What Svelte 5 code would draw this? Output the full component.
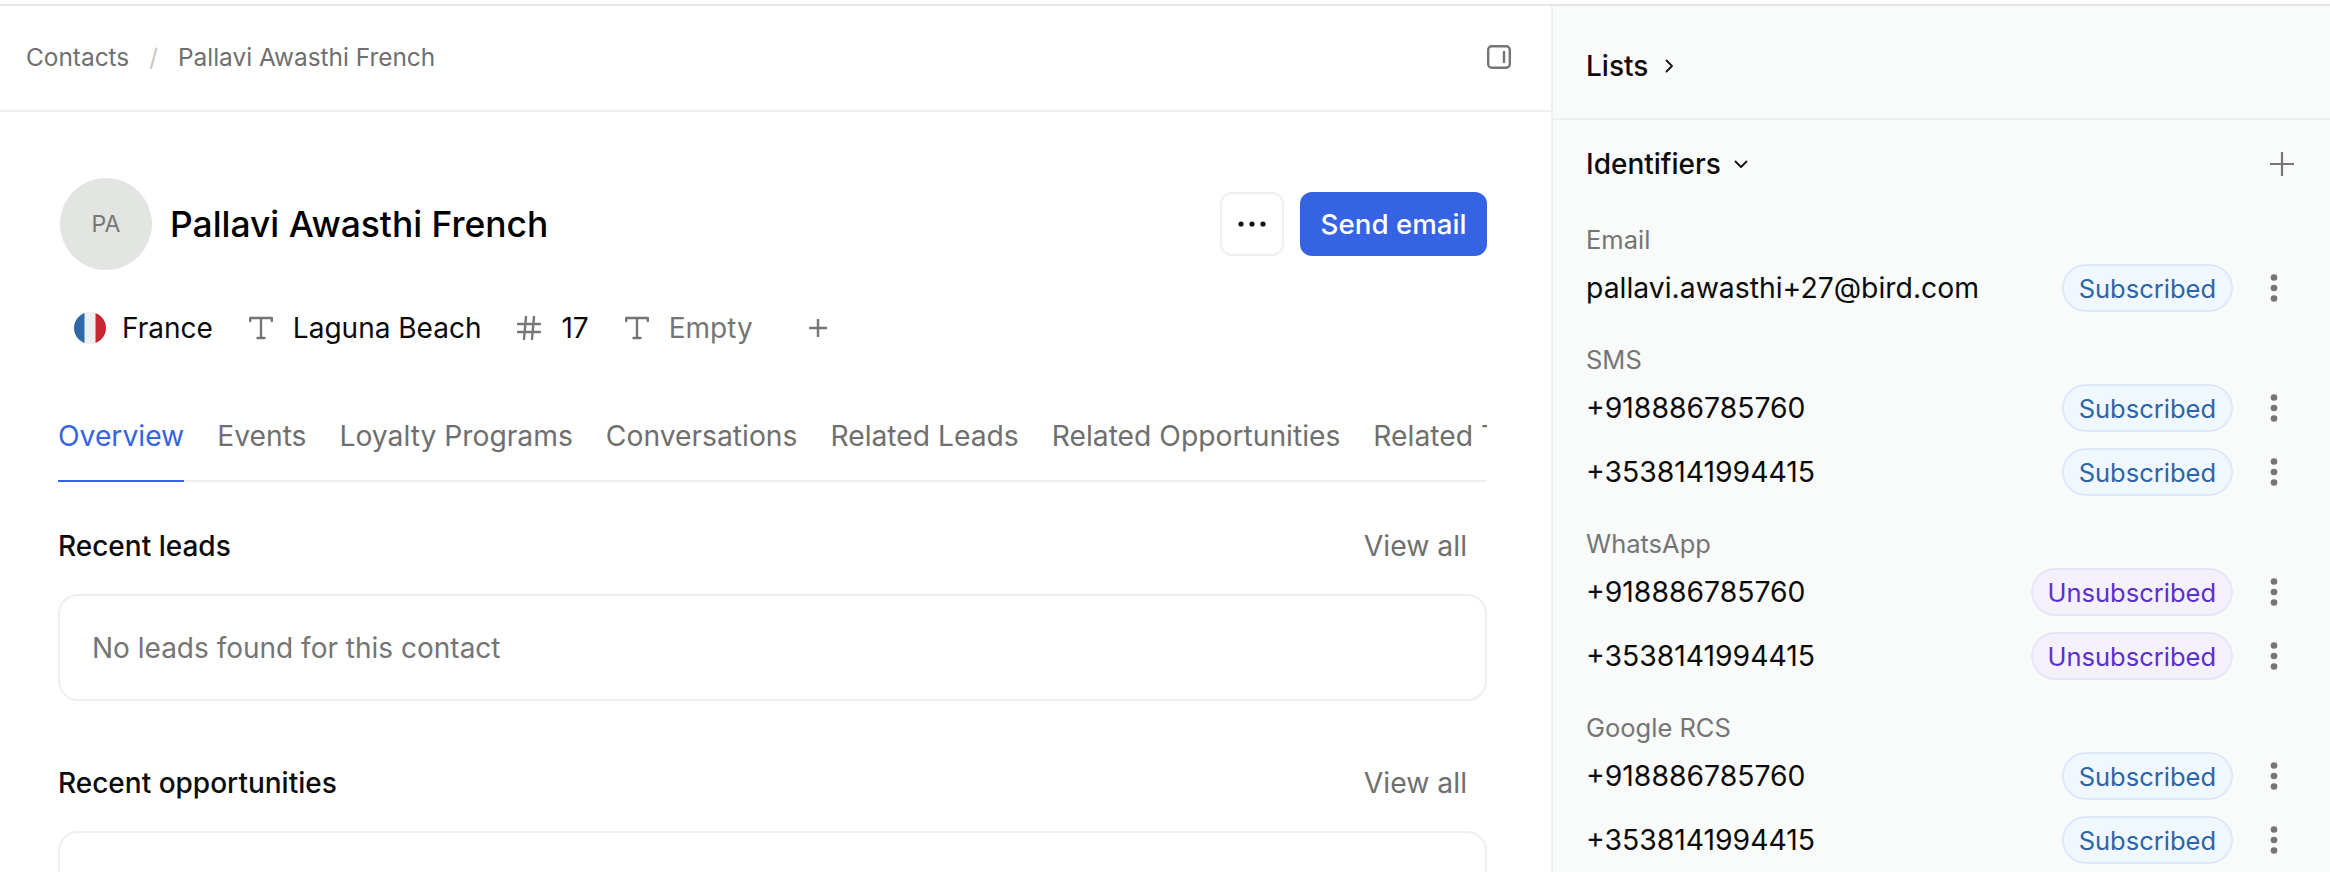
<script>
  const tabs = ['Overview','Events','Loyalty Programs','Conversations','Related Leads','Related Opportunities','Related Tasks'];
  const groups = [
    { label:'Email', rows:[['pallavi.awasthi+27@bird.com','Subscribed']] },
    { label:'SMS', rows:[['+918886785760','Subscribed'],['+3538141994415','Subscribed']] },
    { label:'WhatsApp', rows:[['+918886785760','Unsubscribed'],['+3538141994415','Unsubscribed']] },
    { label:'Google RCS', rows:[['+918886785760','Subscribed'],['+3538141994415','Subscribed']] }
  ];
</script>

{#snippet tIcon()}
  <svg class="ic" viewBox="0 0 24 24" fill="none" stroke="#757575" stroke-width="2.4" stroke-linecap="round" stroke-linejoin="round"><path d="M1.2 5V2h21.600v3M12 2v20M8.500 22h7"/></svg>
{/snippet}

<div class="page">
  <main class="main">
    <header class="crumbs">
      <nav class="trail"><span>Contacts</span><span class="sep">/</span><span>Pallavi Awasthi French</span></nav>
      <svg class="panel-ic" viewBox="0 0 24 24" fill="none" stroke="#757575" stroke-width="2.400"><rect x="1.200" y="1.200" width="21.600" height="21.600" rx="3.500"/><path d="M17 6v12"/></svg>
    </header>
    <section class="content">
      <div class="head">
        <div class="avatar">PA</div>
        <h1>Pallavi Awasthi French</h1>
        <button class="more" aria-label="More"><svg viewBox="0 0 28 6" width="28" height="6" fill="#111"><circle cx="3" cy="3" r="2.600"/><circle cx="14" cy="3" r="2.600"/><circle cx="25" cy="3" r="2.600"/></svg></button>
        <button class="send">Send email</button>
      </div>
      <div class="props">
        <div class="prop flagprop">
          <svg class="flag" viewBox="0 0 32 32"><defs><clipPath id="fc"><circle cx="16" cy="16" r="16"/></clipPath></defs><g clip-path="url(#fc)"><rect width="11" height="32" fill="#2f6aa8"/><rect x="10.500" width="11" height="32" fill="#eeeff1"/><rect x="21.500" width="11" height="32" fill="#c8262f"/></g></svg>
          <span>France</span>
        </div>
        <div class="prop">{@render tIcon()}<span>Laguna Beach</span></div>
        <div class="prop"><svg class="ic" viewBox="0 0 24 24" fill="none" stroke="#757575" stroke-width="2.400" stroke-linecap="round"><path d="M1 8h22M1 16h22M9 1 7 23M17 1l-2 22"/></svg><span>17</span></div>
        <div class="prop">{@render tIcon()}<span class="muted">Empty</span></div>
        <svg class="add" viewBox="0 0 18 18" fill="none" stroke="#757575" stroke-width="2.400"><path d="M9 0v18M0 9h18"/></svg>
      </div>
      <div class="tabs">
        {#each tabs as t, i}<div class="tab" class:active={i===0}>{t}</div>{/each}
      </div>
      <div class="sect-head"><h2>Recent leads</h2><span class="viewall">View all</span></div>
      <div class="card">No leads found for this contact</div>
      <div class="sect-head second"><h2>Recent opportunities</h2><span class="viewall">View all</span></div>
      <div class="card"></div>
    </section>
  </main>
  <aside class="side">
    <div class="lists">
      <span>Lists</span>
      <svg width="9" height="14" viewBox="0 0 9 14" fill="none" stroke="#111" stroke-width="1.800" stroke-linecap="round" stroke-linejoin="round"><path d="m1.500 1.500 5.500 5.500-5.500 5.500"/></svg>
    </div>
    <div class="ids">
      <div class="ids-head">
        <span>Identifiers</span>
        <svg class="chev" width="14" height="9" viewBox="0 0 14 9" fill="none" stroke="#111" stroke-width="1.800" stroke-linecap="round" stroke-linejoin="round"><path d="m1.500 1.500 5.500 5.500 5.500-5.500"/></svg>
        <svg class="plus" viewBox="0 0 24 24" fill="none" stroke="#757575" stroke-width="2.200"><path d="M12 0v24M0 12h24"/></svg>
      </div>
      {#each groups as g}
        <div class="group">
          <div class="glabel">{g.label}</div>
          {#each g.rows as r}
            <div class="row">
              <span class="val">{r[0]}</span>
              <span class="pill" class:un={r[1]==='Unsubscribed'}>{r[1]}</span>
              <svg class="dots" viewBox="0 0 8 28" fill="#757575"><circle cx="4" cy="3.500" r="3.300"/><circle cx="4" cy="14" r="3.300"/><circle cx="4" cy="24.500" r="3.300"/></svg>
            </div>
          {/each}
        </div>
      {/each}
    </div>
  </aside>
</div>

<style>
  :global(body){margin:0;background:#fff;overflow:hidden}
  .page{width:2330px;height:868px;overflow:hidden;display:flex;box-sizing:border-box;border-top:2px solid #e5e7e7;margin-top:4px;font-family:Inter,"Liberation Sans",sans-serif;color:#0b0b0b;font-size:28.350px}
  .main{width:1551px;flex:none;display:flex;flex-direction:column}
  .crumbs{height:106px;box-sizing:border-box;border-bottom:2px solid #eeefef;padding:0 40px 2px 26px;display:flex;align-items:center;justify-content:space-between;flex:none}
  .trail{display:flex;gap:20px;font-size:24.4px;color:#6f6f6f}
  .sep{color:#c6c6c6}
  .panel-ic{width:24px;height:24px}
  .content{padding:66px 64px 0 58px}
  .head{display:flex;align-items:center;height:92px;padding-left:2px}
  .avatar{width:92px;height:92px;border-radius:50%;background:#e3e5e3;color:#777;font-size:23px;display:flex;align-items:center;justify-content:center;flex:none}
  h1{font-size:35.400px;font-weight:450;margin:0 0 0 18px;flex:1;color:#000}
  .more{width:64px;height:64px;border:2px solid #eeefef;border-radius:12px;background:#fff;display:flex;align-items:center;justify-content:center;padding:0}
  .send{margin-left:16px;width:187px;height:64px;border:0;border-radius:12px;background:#3663e4;color:#fff;font:500 27.700px Inter,sans-serif;padding:0}
  .props{display:flex;align-items:center;margin-top:42px;height:32px;padding-left:16px;font-size:28px}
  .prop{display:flex;align-items:center;gap:20px;margin-right:36px}
  .flagprop{gap:16px}
  .flag{width:32px;height:32px}
  .ic{width:24px;height:24px}
  .muted{color:#757575}
  .add{width:18px;height:18px;margin-left:20px}
  .tabs{display:flex;gap:33px;margin-top:44px;height:94px;overflow:hidden;white-space:nowrap;color:#6f6f6f;box-shadow:inset 0 -2px 0 #eeefef;font-size:28.240px}
  .tab{height:94px;box-sizing:border-box;padding-top:31px;line-height:34px;flex:none}
  .active{color:#3663e4;border-bottom:2px solid #3663e4}
  .sect-head{display:flex;justify-content:space-between;align-items:center;height:32px;margin-top:48px;padding-right:20px}
  .second{margin-top:66px}
  h2{font-size:28px;font-weight:500;margin:0;color:#0b0b0b}
  .viewall{color:#6f6f6f}
  .card{margin-top:32px;border:2px solid #eeefef;border-radius:20px;height:107px;box-sizing:border-box;padding:0 32px;display:flex;align-items:center;color:#757575;font-size:28px}
  .side{flex:1;background:#f9fafa;border-left:2px solid #eeefef;min-width:0}
  .lists{height:114px;box-sizing:border-box;border-bottom:2px solid #eeefef;display:flex;align-items:center;gap:17px;padding:8px 0 0 33px;font-size:28px;font-weight:500}
  .ids{padding:28px 36px 0 33px}
  .ids-head{display:flex;align-items:center;height:32px;font-size:28px;font-weight:500;gap:13px}
  .plus{width:24px;height:24px;margin-left:auto}
  .group{margin-top:32px}
  .ids-head + .group{margin-top:44px}
  .glabel{color:#757575;height:32px;line-height:32px;font-size:25.500px;margin-bottom:8px}
  .row{display:flex;align-items:center;height:48px}
  .row + .row{margin-top:16px}
  .val{flex:1}
  .pill{height:48px;box-sizing:border-box;border:2px solid #dde8f8;background:#f1f7fe;color:#2c66a6;border-radius:24px;font-size:25.500px;padding:0 15px;display:flex;align-items:center}
  .un{background:#f4f1fd;border-color:#e6e4f8;color:#5a2fd0}
  .dots{width:8px;height:28px;margin-left:37px;margin-right:16px}
</style>
